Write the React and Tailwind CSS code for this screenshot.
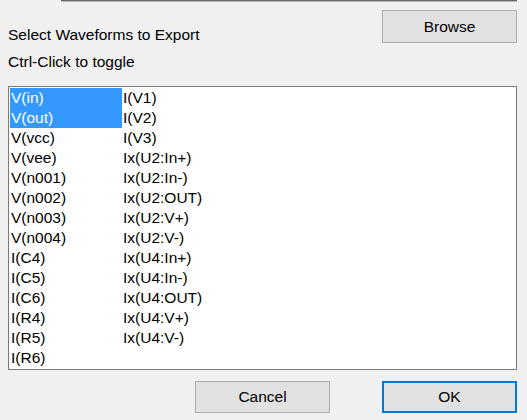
const left = ["V(in)", "V(out)", "V(vcc)", "V(vee)", "V(n001)", "V(n002)", "V(n003)", "V(n004)", "I(C4)", "I(C5)", "I(C6)", "I(R4)", "I(R5)", "I(R6)"];
const right = ["I(V1)", "I(V2)", "I(V3)", "Ix(U2:In+)", "Ix(U2:In-)", "Ix(U2:OUT)", "Ix(U2:V+)", "Ix(U2:V-)", "Ix(U4:In+)", "Ix(U4:In-)", "Ix(U4:OUT)", "Ix(U4:V+)", "Ix(U4:V-)"];
const selected = ["V(in)", "V(out)"];

function Column({ items }) {
  return (
    <div className="flex w-[112px] flex-col">
      {items.map((name) => {
        const on = selected.includes(name);
        return (
          <div
            key={name}
            className={
              on
                ? "h-[20px] whitespace-nowrap bg-[#3399ff] pl-[1px] leading-[20px] text-white"
                : "h-[20px] whitespace-nowrap pl-[1px] leading-[20px] text-black"
            }
          >
            {name}
          </div>
        );
      })}
    </div>
  );
}

export default function App() {
  return (
    <div
      className="flex h-[420px] w-[527px] flex-col overflow-hidden bg-[#f0f0f0] text-[15.5px] text-black"
      style={{ fontFamily: '"Liberation Sans", Arial, sans-serif' }}
    >
      {/* bottom edge of the path box above */}
      <div className="ml-[61px] h-[1px] w-[456px] bg-[#6a6a6a]" />
      <div className="ml-[61px] h-[1px] w-[456px] bg-[#b4b4b4]" />

      <div className="mt-[8px] flex h-[76px] justify-between pl-[8px] pr-[10px]">
        <div className="pt-[15px]">
          <div className="leading-[20px]">Select Waveforms to Export</div>
          <div className="mt-[7px] leading-[20px]">Ctrl-Click to toggle</div>
        </div>
        <button
          type="button"
          className="h-[33px] w-[135px] border border-[#adadad] bg-[#e1e1e1] leading-none"
        >
          Browse
        </button>
      </div>

      <div className="ml-[8px] flex h-[284px] w-[509px] border border-[#7a7a7a] bg-white p-[1px]">
        <Column items={left} />
        <Column items={right} />
      </div>

      <div className="mt-[11px] flex pr-[10px]">
        <button
          type="button"
          className="ml-[195px] h-[32px] w-[135px] border border-[#adadad] bg-[#e1e1e1] leading-none"
        >
          Cancel
        </button>
        <button
          type="button"
          className="ml-auto h-[32px] w-[135px] border-2 border-[#0078d7] bg-[#e1e1e1] leading-none"
        >
          OK
        </button>
      </div>
    </div>
  );
}
